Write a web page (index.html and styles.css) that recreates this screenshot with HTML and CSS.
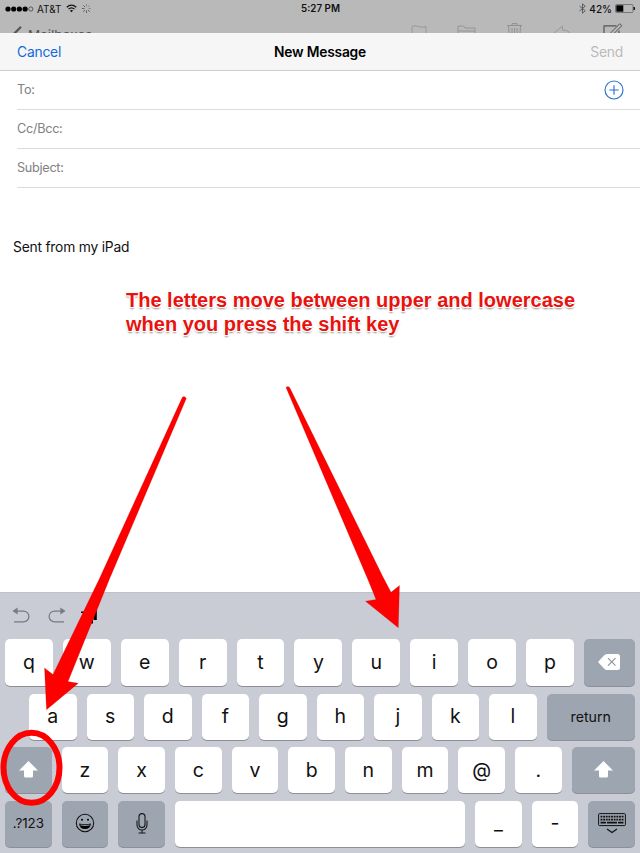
FILE: index.html
```html
<!DOCTYPE html>
<html lang="en">
<head>
<meta charset="utf-8">
<title>New Message</title>
<link rel="stylesheet" href="styles.css">
</head>
<body>
<div class="screen">
  <header class="backdrop">
    <div class="status">
      <div class="status-left">
        <svg width="29" height="8" viewBox="0 0 29 8"><g fill="#000"><circle cx="3" cy="4" r="2.6"/><circle cx="8.7" cy="4" r="2.6"/><circle cx="14.4" cy="4" r="2.6"/><circle cx="20.1" cy="4" r="2.6"/></g><circle cx="25.8" cy="4" r="2.1" fill="none" stroke="#333" stroke-width=".7"/></svg>
        <span class="carrier">AT&amp;T</span>
        <svg class="wifi" width="11" height="9" viewBox="0 0 12 9" fill="none" stroke="#111" stroke-width="1.4"><path d="M.8 3.2Q6-1.4 11.2 3.2M2.7 5.2Q6 2.3 9.3 5.2"/><path d="M4.2 6.7Q6 5.3 7.8 6.7L6 8.6Z" fill="#111" stroke="none"/></svg>
        <svg class="spinner" width="9" height="9" viewBox="0 0 9 9" stroke-width=".9" stroke="#555"><path d="M4.5 0v2.5M7.7 1.3 5.9 3.1M9 4.5H6.5" opacity=".5"/><path d="M7.7 7.7 5.9 5.9M4.5 9V6.5M1.3 7.7 3.1 5.9M0 4.5h2.5M1.3 1.3l1.8 1.8"/></svg>
      </div>
      <div class="clock">5:27 PM</div>
      <div class="status-right">
        <svg width="7" height="11" viewBox="0 0 7 11" fill="none" stroke="#555" stroke-width=".9"><path d="M.5 3 6.2 7.8 3.5 10.2V.8L6.2 3.2.5 8"/></svg>
        <span class="percent">42%</span>
        <svg width="21" height="9" viewBox="0 0 21 9"><rect x=".5" y=".5" width="17.5" height="8" rx="1" fill="none" stroke="#666" stroke-width=".8"/><path d="M1.3 1.3h7v6.4h-7z"/><path d="M19 3q1.2 1.5 0 3z" stroke="#111"/></svg>
      </div>
    </div>
    <div class="mailbar">
      <svg class="chevron" width="11" height="16" viewBox="0 0 11 16" fill="none" stroke="#555" stroke-width="2.2"><path d="M9 .8 1.8 8 9 15.2"/></svg>
      <span class="mailboxes">Mailboxes</span>
      <div class="mail-tools">
        <svg width="16" height="20" viewBox="0 0 16 20" fill="none" stroke="#999"><path d="M1 20V3.5Q4 2 7.500 3.500T15 3.500V13H1"/></svg>
        <svg width="19" height="20" viewBox="0 0 19 20" fill="none" stroke="#949494"><path d="M1 15V3h5.500l1.500 2h10v10zM1 8h17"/></svg>
        <svg width="17" height="20" viewBox="0 0 17 20" fill="none" stroke="#909090"><path d="M1 2.500h15M2.500 2.500l1 16h10l1-16M6 2.500V.6h5v1.900M6 5v10M8.500 5v10M11 5v10"/></svg>
        <svg width="20" height="20" viewBox="0 0 20 20" fill="none" stroke="#999"><path d="M1 10 9.500 3.200V7Q18 7 19 15 16 11.500 9.500 12v4z"/></svg>
        <svg width="20" height="20" viewBox="0 0 20 20" fill="none" stroke="#555"><path d="M13.500 2.800H1V19h15V7.500" stroke-width="1.200"/><path d="M7 13l1-3.500L16.800.7l2 2L10 11.500z"/></svg>
      </div>
    </div>
  </header>

  <main class="sheet">
    <div class="navbar">
      <span class="cancel">Cancel</span>
      <span class="title">New Message</span>
      <span class="send">Send</span>
    </div>
    <div class="field"><span>To:</span>
      <svg class="add" width="20" height="20" viewBox="0 0 20 20" fill="none" stroke="#2a73cc" stroke-width="1.150"><circle cx="10" cy="10" r="9"/><path d="M10 5.300v9.400M5.300 10h9.400"/></svg>
    </div>
    <div class="field"><span>Cc/Bcc:</span></div>
    <div class="field"><span>Subject:</span></div>
    <p class="signature">Sent from my iPad</p>
    <p class="callout">The letters move between upper and lowercase<br>when you press the shift key</p>
  </main>

  <section class="keyboard">
    <div class="shortcuts">
      <svg width="19" height="17" viewBox="0 0 19 17"><path d="M4 4h7.500a5.400 5.400 0 0 1 0 10.800H2" fill="none" stroke="#777b82" stroke-width="1.250"/><path d="M.5 4 5.600.5v7z" fill="#777b82"/></svg>
      <svg width="19" height="17" viewBox="0 0 19 17"><path d="M15 4H7.500a5.400 5.400 0 0 0 0 10.800H17" fill="none" stroke="#777b82" stroke-width="1.250"/><path d="M18.500 4 13.400.5v7z" fill="#777b82"/></svg>
      <svg class="paste" width="17" height="17" viewBox="0 0 17 17"><path d="M1 4.500h3v1.500H1zM13.500 1H16.800v12H13.500zM9 13h4v3.500H9z"/></svg>
    </div>
    <div class="row row-one">
      <div class="key">q</div><div class="key">w</div><div class="key">e</div><div class="key">r</div><div class="key">t</div><div class="key">y</div><div class="key">u</div><div class="key">i</div><div class="key">o</div><div class="key">p</div>
      <div class="key dark wide"><svg width="22" height="16" viewBox="0 0 22 16"><path d="M0 8 6 1.500Q7.300 0 9 0h10.500Q22 0 22 2.500v11Q22 16 19.500 16H9q-1.700 0-3-1.500z" fill="#fff"/><path d="m10 4.200 7.500 7.500m0-7.500L10 11.700" stroke="#8e969f" stroke-width="1.200"/></svg></div>
    </div>
    <div class="row row-two">
      <div class="key">a</div><div class="key">s</div><div class="key">d</div><div class="key">f</div><div class="key">g</div><div class="key">h</div><div class="key">j</div><div class="key">k</div><div class="key">l</div>
      <div class="key dark wide return">return</div>
    </div>
    <div class="row row-three">
      <div class="key dark"><svg width="19" height="17" viewBox="0 0 19 17"><path d="M9.500 0 19 9.500h-5V15q0 1.500-1.500 1.500h-6Q5 16.500 5 15V9.500H0z" fill="#fff"/></svg></div>
      <div class="key">z</div><div class="key">x</div><div class="key">c</div><div class="key">v</div><div class="key">b</div><div class="key">n</div><div class="key">m</div><div class="key">@</div><div class="key">.</div>
      <div class="key dark wide"><svg width="19" height="17" viewBox="0 0 19 17"><path d="M9.500 0 19 9.500h-5V15q0 1.500-1.500 1.500h-6Q5 16.500 5 15V9.500H0z" fill="#fff"/></svg></div>
    </div>
    <div class="row row-four">
      <div class="key dark numbers">.?123</div>
      <div class="key dark"><svg width="20" height="20" viewBox="0 0 20 20"><circle cx="10" cy="10" r="8.700" fill="none" stroke="#111" stroke-width="1.050"/><circle cx="7" cy="6.800" r="1"/><circle cx="13" cy="6.800" r="1"/><path d="M4 10.500q6 1.600 12 0-.8 5.500-6 5.500t-6-5.500z"/><path d="M5.500 12q4.500 1 9 0" stroke="#bbc1c8" fill="none" stroke-width=".8"/></svg></div>
      <div class="key dark"><svg width="12" height="21" viewBox="0 0 12 21" fill="none" stroke="#15181b" stroke-width="1.100"><rect x="3" y=".6" width="6" height="14" rx="3"/><path d="M1 7.500v4.500a5 5 0 0 0 10 0V7.500M6 17v3M2.500 20h7"/></svg></div>
      <div class="key space"></div>
      <div class="key">_</div><div class="key">-</div>
      <div class="key dark"><svg width="28" height="21" viewBox="0 0 28 21" fill="none" stroke="#111"><rect x=".6" y=".6" width="26.800" height="12" rx="1"/><path d="M2.500 3.600h23M2.500 6.600h23" stroke-width="1.900" stroke-dasharray="1.900 .74"/><path d="M2.500 9.600h5.500M9 9.600h10M20 9.600h5.500" stroke-width="1.600"/><path d="m9 16 5 3.500 5-3.500" stroke-width="1.200"/></svg></div>
    </div>
  </section>

  <svg class="annotations" width="640" height="853" viewBox="0 0 640 853">
    <g fill="#f00" stroke="#a11" stroke-opacity=".4" stroke-width=".5">
      <path d="M182.300 397.300Q184.500 395 186.300 398.500L109.500 579 68 681.500 78.300 683.300 46.500 709.800 44.500 668 53 674.500 99 579.500Z"/>
      <path d="M286 387.500Q288.500 385 290.200 388.500L383 577 391 592.200 399.500 585.500 398.300 627.800 365.500 601.200 376 599.500 368.500 581Z"/>
    </g>
    <ellipse cx="31.500" cy="767.800" rx="28" ry="35" fill="none" stroke="#f00" stroke-width="6"/>
  </svg>
</div>
</body>
</html>
```
FILE: styles.css
```css
* { box-sizing: border-box; }

body {
  margin: 0;
  font-family: Inter, "Liberation Sans", sans-serif;
  color: #111;
}

svg { display: block; flex: none; }

.screen {
  position: relative;
  width: 640px;
  height: 853px;
  overflow: hidden;
  display: flex;
  flex-direction: column;
  background: #fff;
}

.annotations { position: absolute; top: 0; left: 0; pointer-events: none; }

.backdrop { flex: none; height: 33px; overflow: hidden; background: #b9b9b9; }

.status {
  display: grid;
  grid-template-columns: 1fr auto 1fr;
  align-items: center;
  height: 17px;
  padding: 0 4px 0 5px;
  font-size: 10px;
}
.status-left, .status-right { display: flex; align-items: center; }
.status-right { justify-content: flex-end; gap: 3px; }
.carrier { margin-left: 3px; }
.wifi { margin-left: 4px; }
.spinner { margin-left: 5px; }
.percent { font-weight: 500; font-size: 10px; }
.clock { font-weight: 600; font-size: 9.800px; }

.mailbar { display: flex; padding: 6px 17px 0 12px; height: 30px; }
.chevron { margin-top: 3px; }
.mailboxes { margin: 4px 0 0 5px; font-size: 13.500px; line-height: 16px; color: #555; }
.mail-tools { display: flex; margin-left: auto; gap: 30px; }

.sheet { flex: none; height: 559px; }
.navbar {
  display: grid;
  grid-template-columns: 1fr auto 1fr;
  align-items: center;
  height: 38px;
  padding: 0 17px;
  background: #f6f6f6;
  border-bottom: 1px solid #cfcfcf;
  font-size: 13.800px;
  letter-spacing: -.2px;
}
.cancel { color: #1169da; }
.title { font-weight: 600; color: #000; }
.send { color: #bbb; text-align: right; }

.field {
  display: flex;
  align-items: center;
  justify-content: space-between;
  height: 39px;
  margin-left: 17px;
  padding: 0 16px 2px 0;
  border-bottom: 1px solid #dcdcdc;
  color: #818181;
  font-size: 12.700px;
  letter-spacing: -.3px;
}
.add { margin-top: 2px; }

.signature { margin: 49px 0 0 13px; font-size: 13.800px; line-height: 20px; letter-spacing: -.2px; }

.callout {
  margin: 31px 0 0 126px;
  color: #e8120e;
  font: bold 20px/24px "Liberation Sans", sans-serif;
  white-space: nowrap;
  text-shadow: 1px 0 #fff, -1px 0 #fff, 0 1px #fff, 0 -1px #fff, 1px 1px #fff, -1px 1px #fff, 0 2px 2px #888;
}

.keyboard {
  flex: none;
  height: 261px;
  display: flex;
  flex-direction: column;
  background: #c9cbd5;
  border-top: 1px solid #c0c2ca;
}
.shortcuts { display: flex; height: 46px; padding: 14px 12px 0; gap: 16px; }
.paste { margin-left: -2px; }

.row { display: flex; gap: 10px; padding: 0 5px; height: 46px; }
.row-one { height: 47px; margin-bottom: 8px; }
.row-two { padding-left: 29px; margin-bottom: 7px; }
.row-three { margin-bottom: 7.500px; }

.key {
  flex: none;
  display: flex;
  align-items: center;
  justify-content: center;
  background: #fff;
  border-radius: 5px;
  box-shadow: 0 1px 0 #8c8f96;
  font-size: 19.500px;
  padding-bottom: 2px;
}
.row-one .key { width: 47.900px; }
.row-two .key { width: 47.500px; }
.row-three .key, .row-four .key { width: 46.670px; padding-bottom: 1px; }
.key.dark { background: #9da5b0; }
.row .key.wide, .row .key.space { flex: 1; }
.row .return { font-size: 14.200px; }
.row .numbers { font-size: 13.300px; }
```
